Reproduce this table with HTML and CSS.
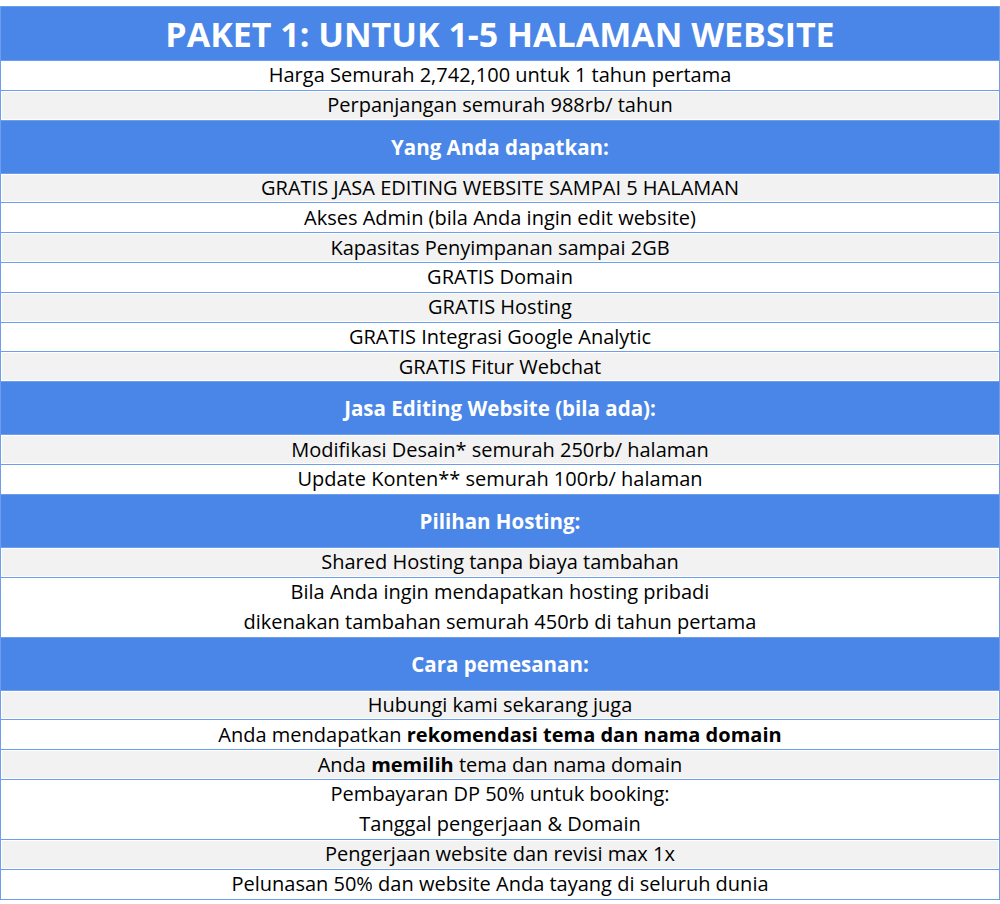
FILE: index.html
```html
<!DOCTYPE html>
<html>
<head>
<meta charset="utf-8">
<link rel="stylesheet" href="styles.css">
</head>
<body>
<div class="sheet">
  <div class="row title"><span>PAKET 1: UNTUK 1-5 HALAMAN WEBSITE</span></div>
  <div class="row white"><span>Harga Semurah 2,742,100 untuk 1 tahun pertama</span></div>
  <div class="row gray"><span>Perpanjangan semurah 988rb/ tahun</span></div>
  <div class="row head"><span>Yang Anda dapatkan:</span></div>
  <div class="row gray"><span>GRATIS JASA EDITING WEBSITE SAMPAI 5 HALAMAN</span></div>
  <div class="row white"><span>Akses Admin (bila Anda ingin edit website)</span></div>
  <div class="row gray"><span>Kapasitas Penyimpanan sampai 2GB</span></div>
  <div class="row white"><span>GRATIS Domain</span></div>
  <div class="row gray"><span>GRATIS Hosting</span></div>
  <div class="row white"><span>GRATIS Integrasi Google Analytic</span></div>
  <div class="row gray"><span>GRATIS Fitur Webchat</span></div>
  <div class="row head"><span>Jasa Editing Website (bila ada):</span></div>
  <div class="row gray"><span>Modifikasi Desain* semurah 250rb/ halaman</span></div>
  <div class="row white"><span>Update Konten** semurah 100rb/ halaman</span></div>
  <div class="row head"><span>Pilihan Hosting:</span></div>
  <div class="row gray"><span>Shared Hosting tanpa biaya tambahan</span></div>
  <div class="row white double"><span>Bila Anda ingin mendapatkan hosting pribadi<br>dikenakan tambahan semurah 450rb di tahun pertama</span></div>
  <div class="row head"><span>Cara pemesanan:</span></div>
  <div class="row gray"><span>Hubungi kami sekarang juga</span></div>
  <div class="row white"><span>Anda mendapatkan <b>rekomendasi tema dan nama domain</b></span></div>
  <div class="row gray"><span>Anda <b>memilih</b> tema dan nama domain</span></div>
  <div class="row white double"><span>Pembayaran DP 50% untuk booking:<br>Tanggal pengerjaan &amp; Domain</span></div>
  <div class="row gray"><span>Pengerjaan website dan revisi max 1x</span></div>
  <div class="row white"><span>Pelunasan 50% dan website Anda tayang di seluruh dunia</span></div>
</div>
</body>
</html>
```
FILE: styles.css
```css
html, body {
  margin: 0;
  padding: 0;
  background: #ffffff;
}
body {
  padding-top: 6px;
  font-family: "Open Sans", "Liberation Sans", sans-serif;
  color: #000;
}
.sheet {
  width: 1000px;
  box-sizing: border-box;
  border: 1px solid #6d9eeb;
  border-top: none;
  display: flex;
  flex-direction: column;
}
.row {
  box-sizing: border-box;
  height: 29.8px;
  border-top: 1px solid #6d9eeb;
  display: flex;
  align-items: center;
  justify-content: center;
  text-align: center;
  font-size: 20px;
  line-height: 30px;
  box-shadow: inset 0 0 0 1px #ffffff;
}
.white { background: #ffffff; }
.gray { background: #f2f2f2; }
.double { height: 60px; }
.head {
  height: 53px;
  background: #4a86e8;
  color: #ffffff;
  font-weight: 700;
  font-size: 20.5px;
  box-shadow: none;
}
.title {
  height: 54px;
  background: #4a86e8;
  color: #ffffff;
  font-weight: 700;
  font-size: 34px;
  box-shadow: none;
}
.row b { font-weight: 700; }
```
